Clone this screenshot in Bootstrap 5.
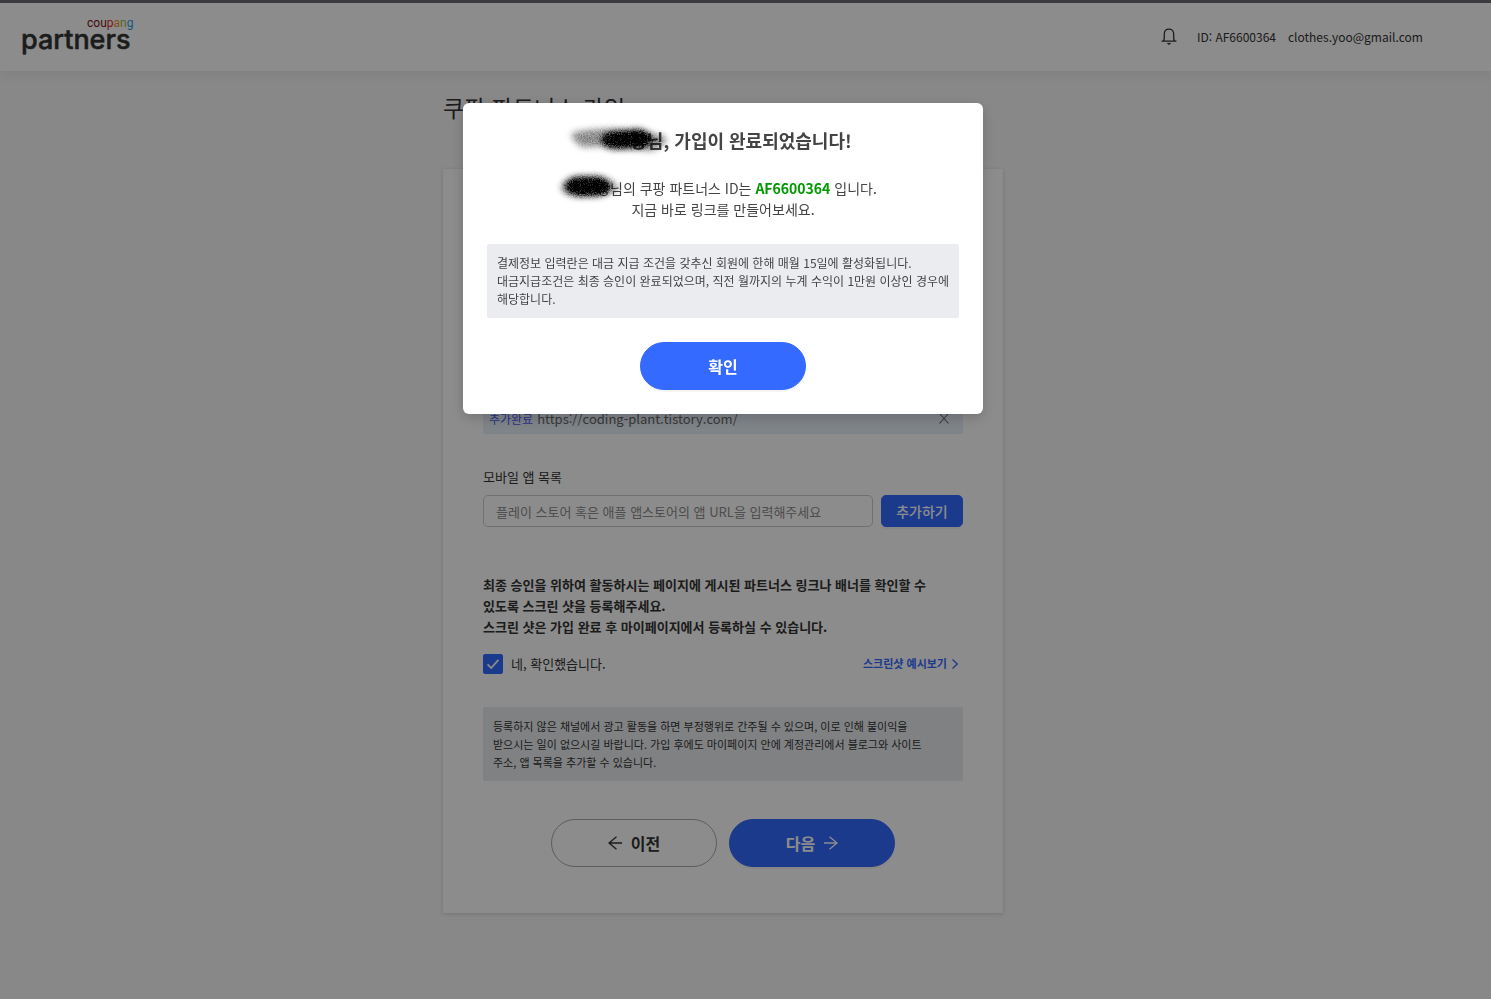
<!DOCTYPE html>
<html lang="ko">
<head>
<meta charset="utf-8">
<meta name="viewport" content="width=device-width, initial-scale=1">
<title>쿠팡 파트너스 가입</title>
<link rel="stylesheet" href="https://cdn.jsdelivr.net/npm/bootstrap@5.3.0/dist/css/bootstrap.min.css">
<style>
  :root { --brand: #346aff; --gutter-end: 45px; }
  body { background: #f7f7f7; color: #333; font: 14px/21px "Noto Sans CJK KR", sans-serif; min-height: 100vh; border-top: 3px solid #6a6a74; word-break: keep-all; }
  .site-header { height: 68px; background: #fff; box-shadow: 0 2px 12px rgba(0,0,0,.08); padding: 0 68px 0 22px; }
  .logo { color: #333; text-decoration: none; }
  .logo svg { display: block; overflow: visible; }
  .account { font-size: 12px; line-height: 18px; gap: 12px; }
  .account a { color: #333; text-decoration: none; }
  .icon-btn { background: none; border: 0; padding: 0; color: #333; line-height: 0; }
  .page-main { padding-right: var(--gutter-end); }
  .join { max-width: 560px; }
  .join-title { font-size: 23px; line-height: 34px; font-weight: 400; margin: 19px 0 45px; }
  .panel { background: #fff; box-shadow: 0 1px 4px rgba(0,0,0,.15); padding: 233px 40px 46px; font-size: 13px; }
  .site-row { height: 32px; padding: 0 12px 0 6px; background: #e8f0fa; border-radius: 2px; color: #666; margin-bottom: 32px; }
  .site-row .tag { font-size: 12px; color: #4a5cf0; }
  .form-control { height: 32px; font-size: 13px; line-height: 20px; border-color: #ccc; border-radius: 5px; padding: 5px 12px; }
  .form-control::placeholder { color: #8c8c8c; opacity: 1; }
  .btn-brand { --bs-btn-color: #fff; --bs-btn-bg: var(--brand); --bs-btn-border-color: var(--brand); --bs-btn-hover-color: #fff; --bs-btn-hover-bg: #2558e0; --bs-btn-active-bg: #2558e0; --bs-btn-active-color: #fff; box-shadow: 0 2px 0 rgba(0,0,0,.04); }
  .btn-add { width: 82px; height: 32px; font-size: 14px; line-height: 20px; font-weight: 500; padding: 0; border-radius: 5px; flex: none; }
  .btn-pill { width: 166px; height: 48px; border-radius: 24px; font-size: 16px; line-height: 24px; font-weight: 700; gap: 9px; display: inline-flex; align-items: center; justify-content: center; padding: 0; }
  .btn-line { border-color: #aaa; color: #333; background: #fff; }
  .ask { margin: 47px 0 16px; font-weight: 700; }
  .form-check-input { width: 20px; height: 20px; margin: 0; }
  .form-check-input[type=checkbox] { border-radius: 2px; }
  .form-check-input:checked { background-color: var(--brand); border-color: var(--brand); }
  .form-check-input:checked[type=checkbox] { background-image: url("data:image/svg+xml,%3csvg xmlns='http://www.w3.org/2000/svg' viewBox='0 0 20 20'%3e%3cpath fill='none' stroke='%23fff' stroke-width='2' d='M4 10.500l4 4 8-9'/%3e%3c/svg%3e"); }
  .agree-row { margin-bottom: 33px; }
  .example { color: var(--brand); font-size: 11px; font-weight: 700; text-decoration: none; margin-right: 4px; }
  .note { font-size: 12px; line-height: 18px; padding: 10px; background: #ebecf0; border-radius: 2px; margin: 0; color: #444; }
  .panel .note { font-size: 11px; color: #333; background: #e9ecef; }
  .actions { gap: 12px; margin-top: 38px; }
  .veil { background: rgba(0,0,0,.45); padding-right: var(--gutter-end); }
  .veil .modal-dialog { max-width: 520px; margin: 103px auto 0; }
  .veil .modal-content { border: 0; border-radius: 6px; padding: 24px; color: #444; box-shadow: 0 4px 14px rgba(0,0,0,.18); }
  .veil h2 { font-size: 18px; line-height: 27px; font-weight: 700; margin: 0 0 24px; }
  .veil .note { padding-right: 0; }
  .partner-id { color: #009900; }
  .masked { display: inline-block; position: relative; width: 28px; }
  .masked svg { position: absolute; overflow: visible; left: -32px; top: -8px; pointer-events: none; z-index: 1; }
  h2 .masked { width: 36px; }
  h2 .masked svg { left: -28px; }
</style>
</head>
<body>
<header class="site-header d-flex align-items-center justify-content-between">
  <a class="logo" href="#" aria-label="coupang partners">
    <svg width="112" height="40" viewBox="0 0 112 40">
      <text x="65" y="10" font-family="Roboto, sans-serif" font-size="12" font-weight="400"><tspan fill="#7a1512">cou</tspan><tspan fill="#e0262c">p</tspan><tspan fill="#f0941f">a</tspan><tspan fill="#8bc03a">n</tspan><tspan fill="#2f9be0">g</tspan></text>
      <text x="-1" y="32" font-family="Inter, sans-serif" font-size="27" font-weight="500" fill="#333" stroke="#333" stroke-width=".5" stroke-linejoin="round">partners</text>
    </svg>
  </a>
  <div class="account d-flex align-items-center">
    <button class="icon-btn me-2" type="button" aria-label="알림">
      <svg width="16" height="18" viewBox="0 0 16 18" fill="none" stroke="currentColor" stroke-width="1.3"><path d="M.5 13.2h15M2.4 13c.8-1 .9-2 .9-3.400V6.200C3.300 3 5.300 1.200 8 1.200S12.700 3 12.700 6.200v3.400c0 1.400.1 2.400.9 3.400"/><path d="M6.400 15.300c.3 1.500 2.900 1.500 3.200 0z" fill="currentColor" stroke-width=".6"/></svg>
    </button>
    <span>ID: AF6600364</span>
    <a href="#">clothes.yoo@gmail.com</a>
  </div>
</header>

<main class="page-main">
  <div class="join mx-auto">
    <h1 class="join-title">쿠팡 파트너스 가입</h1>
    <form class="panel">
      <div class="site-row d-flex align-items-center">
        <span class="tag me-1">추가완료</span><span>https://coding-plant.tistory.com/</span>
        <button class="icon-btn ms-auto" type="button" aria-label="삭제"><svg width="14" height="14" viewBox="0 0 14 14" fill="none" stroke="#666" stroke-width="1.100"><path d="M2.500 2.500l9 10M11.500 2.500l-9 10"/></svg></button>
      </div>
      <label class="d-block mb-2" for="app-url">모바일 앱 목록</label>
      <div class="d-flex gap-2">
        <input class="form-control" id="app-url" type="text" placeholder="플레이 스토어 혹은 애플 앱스토어의 앱 URL을 입력해주세요">
        <button class="btn btn-brand btn-add" type="button">추가하기</button>
      </div>
      <p class="ask">최종 승인을 위하여 활동하시는 페이지에 게시된 파트너스 링크나 배너를 확인할 수<br>있도록 스크린 샷을 등록해주세요.<br>스크린 샷은 가입 완료 후 마이페이지에서 등록하실 수 있습니다.</p>
      <div class="agree-row d-flex align-items-center">
        <input class="form-check-input" type="checkbox" id="agree" checked>
        <label class="ms-2" for="agree">네, 확인했습니다.</label>
        <a class="example ms-auto d-flex align-items-center gap-1" href="#">스크린샷 예시보기
          <svg width="8" height="12" viewBox="0 0 8 12" fill="none" stroke="currentColor" stroke-width="1.300"><path d="M1.500 1.500L6.300 6l-4.800 4.500"/></svg></a>
      </div>
      <p class="note">등록하지 않은 채널에서 광고 활동을 하면 부정행위로 간주될 수 있으며, 이로 인해 불이익을<br>받으시는 일이 없으시길 바랍니다. 가입 후에도 마이페이지 안에 계정관리에서 블로그와 사이트<br>주소, 앱 목록을 추가할 수 있습니다.</p>
      <div class="actions d-flex justify-content-center">
        <button class="btn btn-pill btn-line" type="button"><svg width="14" height="14" viewBox="0 0 14 14" fill="none" stroke="currentColor" stroke-width="1.300"><path d="M14 7H1M8.500.8L1 7l7.500 6.200"/></svg>이전</button>
        <button class="btn btn-pill btn-brand" type="button">다음<svg width="14" height="14" viewBox="0 0 14 14" fill="none" stroke="currentColor" stroke-width="1.300"><path d="M0 7h13M5.500.8L13 7l-7.500 6.200"/></svg></button>
      </div>
    </form>
  </div>
</main>

<div class="modal veil show d-block" tabindex="-1" role="dialog" aria-modal="true" aria-labelledby="done-title">
  <div class="modal-dialog">
    <div class="modal-content text-center">
      <h2 id="done-title"><span class="masked">&nbsp;<svg width="120" height="44" viewBox="0 0 120 44" aria-hidden="true">
        <defs>
          <!-- spray-brush edge: blurred shape broken up by fine noise -->
          <filter id="spray" x="-20%" y="-40%" width="140%" height="180%" color-interpolation-filters="sRGB">
            <feGaussianBlur in="SourceGraphic" stdDeviation="3" result="soft"/>
            <feTurbulence type="fractalNoise" baseFrequency=".9" numOctaves="2" seed="4"/>
            <feColorMatrix values="0 0 0 0 0  0 0 0 0 0  0 0 0 0 0  2 0 0 0 -.5" result="grain"/>
            <feComposite in="soft" in2="grain" operator="arithmetic" k1=".6" k2=".8"/>
          </filter>
        </defs>
        <g filter="url(#spray)">
          <path opacity=".4" d="M6 14q20-5 50-4l40 6q8 5 2 9l-12 7-36-5-34 1q-12-8-10-14z"/>
          <path d="M36 22q0-7 10-9l26-3q12 2 14 10-2 8-14 9l-24 1q-12-2-12-8z"/>
        </g></svg></span>창님, 가입이 완료되었습니다!</h2>
      <p class="mb-4"><span class="masked">&nbsp;<svg width="110" height="36" viewBox="0 0 110 36" aria-hidden="true">
        <g filter="url(#spray)">
          <path opacity=".4" d="M24 17q2-8 14-11l24 0 12 4q8 6 8 10l-14 5-26 2q-18-2-18-10z"/>
          <path d="M28 17q2-9 16-10l18 0q10 3 11 10-2 8-14 9l-14 0q-14-1-17-9z"/>
        </g></svg></span>창님의 쿠팡 파트너스 ID는 <strong class="partner-id">AF6600364</strong> 입니다.<br>지금 바로 링크를 만들어보세요.</p>
      <p class="note text-start">결제정보 입력란은 대금 지급 조건을 갖추신 회원에 한해 매월 15일에 활성화됩니다.<br>대금지급조건은 최종 승인이 완료되었으며, 직전 월까지의 누계 수익이 1만원 이상인 경우에<br>해당합니다.</p>
      <button class="btn btn-pill btn-brand mt-4 mx-auto" type="button">확인</button>
    </div>
  </div>
</div>
<script src="https://cdn.jsdelivr.net/npm/bootstrap@5.3.0/dist/js/bootstrap.bundle.min.js"></script>
</body>
</html>
